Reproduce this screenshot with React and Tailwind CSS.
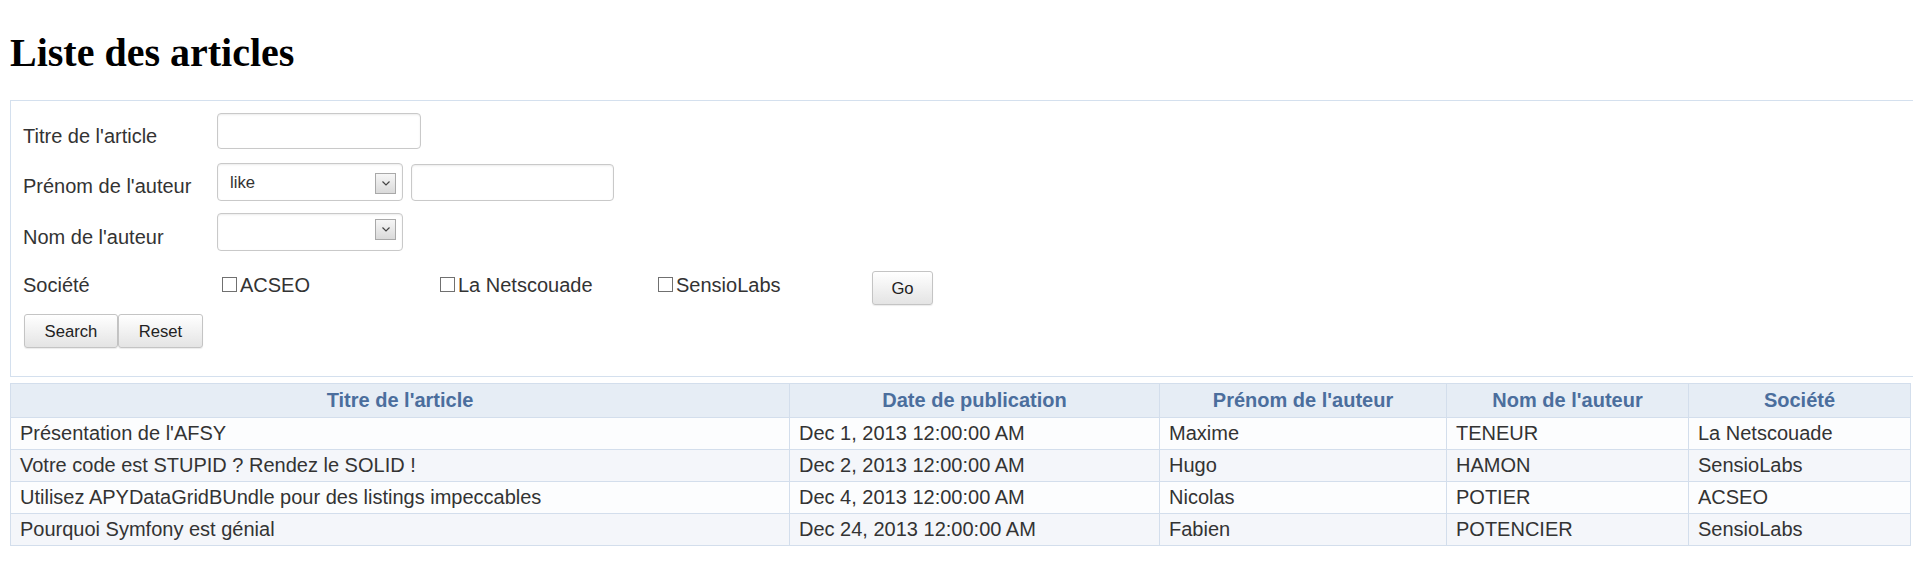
import React from 'react'

const articles = [
  ["Présentation de l'AFSY", 'Dec 1, 2013 12:00:00 AM', 'Maxime', 'TENEUR', 'La Netscouade'],
  ['Votre code est STUPID ? Rendez le SOLID !', 'Dec 2, 2013 12:00:00 AM', 'Hugo', 'HAMON', 'SensioLabs'],
  ['Utilisez APYDataGridBUndle pour des listings impeccables', 'Dec 4, 2013 12:00:00 AM', 'Nicolas', 'POTIER', 'ACSEO'],
  ['Pourquoi Symfony est génial', 'Dec 24, 2013 12:00:00 AM', 'Fabien', 'POTENCIER', 'SensioLabs'],
]

const columns = ["Titre de l'article", 'Date de publication', "Prénom de l'auteur", "Nom de l'auteur", 'Société']
const colWidths = ['w-[779px]', 'w-[370px]', 'w-[287px]', 'w-[242px]', 'w-[222px]']

const inputCls = 'block rounded-[4px] border border-[#c9c9c9] bg-white shadow-[inset_0_1px_2px_rgba(0,0,0,0.08)] outline-none'
const btnCls = 'h-[34px] rounded-[3px] border border-[#c4c4c4] bg-linear-to-b from-white to-[#e4e4e4] text-[16.67px] text-[#222] shadow-[0_1px_1px_rgba(0,0,0,0.08)]'

function Label({ children, top }) {
  return (
    <div className={`w-[194px] shrink-0 text-[20px] leading-[23px] text-[#333] ${top}`}>{children}</div>
  )
}

function Select({ value, arrowTop }) {
  return (
    <div className="relative">
      <select className={`${inputCls} appearance-none w-[186px] h-[38px] pl-[12px] text-[16.67px] text-[#333] font-['Liberation_Sans',Arial,sans-serif]`} defaultValue={value}>
        <option value={value}>{value}</option>
      </select>
      <div className={`absolute right-[7px] ${arrowTop} w-[21px] h-[21px] border border-[#a9a9a9] bg-linear-to-b from-[#f6f6f6] to-[#dadada] flex justify-center pt-[7px] pointer-events-none`}>
        <svg width="8" height="5" viewBox="0 0 8 5" fill="none">
          <path d="M0.5 0.5 L4 4 L7.5 0.5" stroke="#444" strokeWidth="1.2" />
        </svg>
      </div>
    </div>
  )
}

function Check({ label }) {
  return (
    <label className="w-[218px] shrink-0 flex items-start text-[20px] leading-[23px] text-[#333]">
      <input type="checkbox" className="appearance-none ml-[5px] mt-[3px] w-[15px] h-[15px] border border-[#707070] bg-white" />
      <span className="ml-[3px]">{label}</span>
    </label>
  )
}

export default function App() {
  return (
    <div className="min-h-screen overflow-hidden bg-white px-[10px] font-['Liberation_Sans',Arial,sans-serif]">
      <h1 className="mt-[30px] mb-[24px] text-[40px] leading-[46px] font-bold text-black font-['Liberation_Serif','Times_New_Roman',serif]">
        Liste des articles
      </h1>

      <div className="w-[1920px] border border-[#d4e0ee] pt-[12px] pb-[28px] pl-[12px]">
        <div className="flex items-start">
          <Label top="mt-[12px]">Titre de l'article</Label>
          <input className={`${inputCls} w-[204px] h-[36px]`} />
        </div>

        <div className="flex items-start mt-[14px]">
          <Label top="mt-[12px]">Prénom de l'auteur</Label>
          <Select value="like" arrowTop="top-[10px]" />
          <input className={`${inputCls} ml-[8px] mt-[1px] w-[203px] h-[37px]`} />
        </div>

        <div className="flex items-start mt-[12px]">
          <Label top="mt-[13px]">Nom de l'auteur</Label>
          <Select value="" arrowTop="top-[6px]" />
        </div>

        <div className="flex items-start mt-[20px]">
          <Label top="mt-[3px]">Société</Label>
          <div className="flex items-start mt-[3px]">
            <Check label="ACSEO" />
            <Check label="La Netscouade" />
            <Check label="SensioLabs" />
          </div>
          <button className={`${btnCls} ml-[1px] w-[61px] h-[33px]`}>Go</button>
        </div>

        <div className="flex mt-[9px] ml-[1px]">
          <button className={`${btnCls} w-[94px]`}>Search</button>
          <button className={`${btnCls} w-[85px]`}>Reset</button>
        </div>
      </div>

      <table className="mt-[6px] table-fixed border-collapse w-[1900px] text-[20px] leading-[23px]">
        <colgroup>
          {colWidths.map((w, i) => (
            <col key={i} className={w} />
          ))}
        </colgroup>
        <thead>
          <tr className="bg-[#e6edf5]">
            {columns.map((c) => (
              <th key={c} className="h-[34px] p-0 border border-[#d3deec] text-center font-bold text-[#4b6e9d]">
                {c}
              </th>
            ))}
          </tr>
        </thead>
        <tbody>
          {articles.map((row, i) => (
            <tr key={i} className={i % 2 === 0 ? 'bg-[#fcfdfe]' : 'bg-[#f4f6fa]'}>
              {row.map((cell, j) => (
                <td key={j} className="h-[32px] py-0 pl-[9px] border border-[#d3deec] text-left text-[#333] whitespace-nowrap">
                  {cell}
                </td>
              ))}
            </tr>
          ))}
        </tbody>
      </table>
    </div>
  )
}
